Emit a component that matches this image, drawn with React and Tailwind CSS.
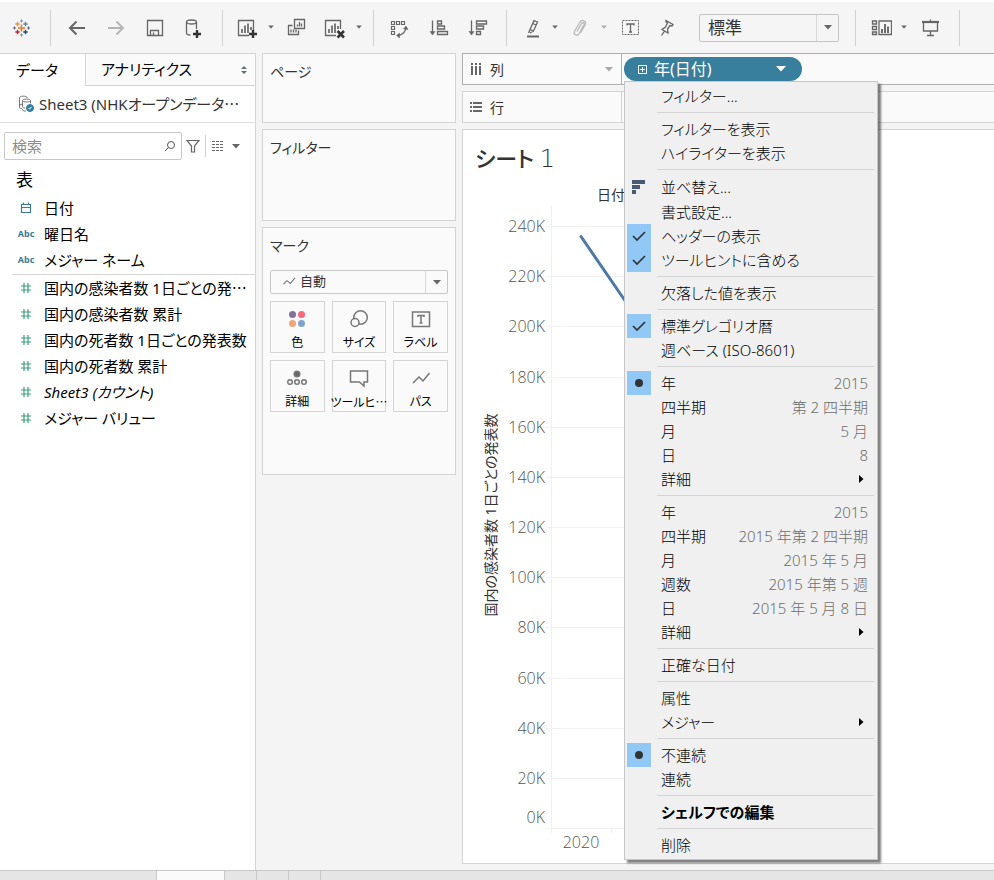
/**
 * App.jsx
 *
 * Worksheet view: toolbar, data pane, cards column, shelves and the sheet,
 * with the context menu of the 年(日付) pill open.
 */

import React, { useState } from 'react';

const CJK = "font-['Noto_Sans_CJK_JP',sans-serif]";

// ── Data ────────────────────────────────────────────────────────────────────
const DIMENSIONS = [
  { icon: 'date', label: '日付' },
  { icon: 'abc',  label: '曜日名' },
  { icon: 'abc',  label: 'メジャー ネーム' },
];

const MEASURES = [
  { label: '国内の感染者数 1日ごとの発', cut: true },
  { label: '国内の感染者数 累計' },
  { label: '国内の死者数 1日ごとの発表数' },
  { label: '国内の死者数 累計' },
  { label: 'Sheet3 (カウント)', italic: true },
  { label: 'メジャー バリュー' },
];

// One inner array per block; blocks are divided by a rule
const MENU = [
  [{ label: 'フィルター...' }],
  [{ label: 'フィルターを表示' }, { label: 'ハイライターを表示' }],
  [
    { label: '並べ替え...', mark: 'sort' },
    { label: '書式設定...' },
    { label: 'ヘッダーの表示', mark: 'check' },
    { label: 'ツールヒントに含める', mark: 'check' },
  ],
  [{ label: '欠落した値を表示' }],
  [{ label: '標準グレゴリオ暦', mark: 'check' }, { label: '週ベース (ISO-8601)' }],
  [
    { label: '年', hint: '2015', mark: 'dot' },
    { label: '四半期', hint: '第 2 四半期' },
    { label: '月', hint: '5 月' },
    { label: '日', hint: '8' },
    { label: '詳細', sub: true },
  ],
  [
    { label: '年', hint: '2015' },
    { label: '四半期', hint: '2015 年第 2 四半期' },
    { label: '月', hint: '2015 年 5 月' },
    { label: '週数', hint: '2015 年第 5 週' },
    { label: '日', hint: '2015 年 5 月 8 日' },
    { label: '詳細', sub: true },
  ],
  [{ label: '正確な日付' }],
  [{ label: '属性' }, { label: 'メジャー', sub: true }],
  [{ label: '不連続', mark: 'dot' }, { label: '連続' }],
  [{ label: 'シェルフでの編集', bold: true }],
  [{ label: '削除' }],
];

// ── Icons ───────────────────────────────────────────────────────────────────
const Icon = ({ children, color = '#666666' }) => (
  <svg width="24" height="24" viewBox="0 0 24 24" fill="none" stroke={color} strokeWidth="1.3" aria-hidden="true">
    {children}
  </svg>
);

const Caret = ({ color = '#666666', big = false }) => (
  <svg width="8" height="5" viewBox="0 0 8 5" fill={color} aria-hidden="true">
    <path d={big ? 'M0 0h8L4 4.5z' : 'M1.2 0.5h5.6L4 3.8z'} />
  </svg>
);

const cross = (x, y, r) => `M${x - r} ${y}h${r * 2}M${x} ${y - r}v${r * 2}`;

const LogoIcon = () => (
  <Icon>
    <path d={cross(11.5, 12, 3.5)} stroke="#e8762d" strokeWidth="1.6" />
    <path d={cross(7.5, 8, 2.2)} stroke="#eb912c" />
    <path d={cross(15.5, 8, 2.2)} stroke="#59879b" />
    <path d={cross(7.5, 16, 2.2)} stroke="#c72035" />
    <path d={cross(15.5, 16, 2.2)} stroke="#1f457e" />
    <path d={cross(11.5, 5, 1.6)} stroke="#7099a6" strokeWidth="1" />
    <path d={cross(11.5, 19, 1.6)} stroke="#7099a6" strokeWidth="1" />
    <path d={cross(4.5, 12, 1.6)} stroke="#5c6692" strokeWidth="1" />
    <path d={cross(18.5, 12, 1.6)} stroke="#5c6692" strokeWidth="1" />
  </Icon>
);

const BackIcon = () => (
  <Icon><path d="M19 12H4M10.5 5.5L4 12l6.5 6.5" strokeWidth="2" /></Icon>
);

const ForwardIcon = () => (
  <Icon color="#b4b4b4"><path d="M3 12h15M11.5 5.5L18 12l-6.5 6.5" strokeWidth="1.8" /></Icon>
);

const SaveIcon = () => (
  <Icon>
    <path d="M3.5 4.5h15v15h-15z" />
    <path d="M6.5 19.5v-5h8v5M9.5 19.5v-3" />
  </Icon>
);

const NewDataIcon = () => (
  <Icon>
    <ellipse cx="8.5" cy="6" rx="5" ry="2" />
    <path d="M3.5 6v11c0 1.3 2 2 4 2M13.5 6v7" />
    <path d={cross(14, 18, 4)} stroke="#333333" strokeWidth="2.4" />
  </Icon>
);

const NewSheetIcon = () => (
  <Icon>
    <path d="M14 19.5H3.5v-15h15V14" />
    <path d="M7 17v-4M10 17V9.5M13 17V7.5M16 14v-3" strokeWidth="1.7" />
    <path d={cross(18, 18, 4)} stroke="#333333" strokeWidth="2.4" />
  </Icon>
);

const DuplicateIcon = () => (
  <Icon>
    <path d="M7.5 3.5h10v9h-10z" />
    <path d="M10.5 10.5V8.5M12.5 10.5V6M14.5 10.5V7.5" />
    <path d="M5.5 9.500h-4v9h10v-4M4 16.500v-3M6.500 16.500v-3M9 16.500v-3" />
  </Icon>
);

const ClearIcon = () => (
  <Icon>
    <path d="M13 19.5H2.5v-15h15V13" />
    <path d="M6 17v-4M9 17V9.5M12 17V7.5M15 13v-3" strokeWidth="1.7" />
    <path d="M14.5 15l6.5 6.5M21 15l-6.5 6.5" stroke="#333333" strokeWidth="2.6" />
  </Icon>
);

const SwapIcon = () => (
  <Icon>
    <path d="M2.5 5.5h3v3h-3zM7.5 5.5h3v3h-3zM12.5 5.5h3v3h-3zM2.5 10.5h3v3h-3zM2.5 15.5h3v3h-3z" strokeWidth="1.2" />
    <path d="M17 11c0 4.5-3.5 8-8 8.5" />
    <path d="M14.5 13l2.5-3 2 3.5zM10.5 17l-3 2.5 3 2.5z" fill="#666666" strokeWidth="0.5" />
  </Icon>
);

const SortAscIcon = () => (
  <Icon>
    <path d="M4.5 4.5v14" />
    <path d="M2 15.5h5l-2.5 3.5z" fill="#666666" strokeWidth="0.5" />
    <path d="M9.5 5h4v3h-4zM9.5 10h7v3h-7zM9.5 15.5h10v3h-10z" />
  </Icon>
);

const SortDescIcon = () => (
  <Icon>
    <path d="M4.5 4.5v14" />
    <path d="M2 15.5h5l-2.5 3.5z" fill="#666666" strokeWidth="0.5" />
    <path d="M9.5 5h10v3h-10zM9.5 10h7v3h-7zM9.5 15.5h4v3h-4z" />
  </Icon>
);

const HighlightIcon = () => (
  <Icon>
    <path d="M8 20.5h12" strokeWidth="2" />
    <path d="M15 4.5l3.5 1.5-4 9-3.5-1.5zM11 13.5l-1.5 3.5M14.5 15l-3.5 2M13.8 7.5l3.4 1.5" />
  </Icon>
);

const ClipIcon = () => (
  <Icon color="#b9b9b9">
    <path d="M9 15.5l4.5-8c1-1.600 3.300-.4 2.500 1.300l-5 9c-1.700 2.900-6 .7-4.500-2.300l5.500-9.500c2-3 6.700-.7 5.200 2.600l-4.700 8" />
  </Icon>
);

const TextBoxIcon = () => (
  <Icon>
    <path d="M5.5 4.5h16v14h-16z" strokeWidth="1" strokeDasharray="2 1" />
    <path d="M10 9.5V8h7v1.5M13.5 8v8M12 16h3" />
  </Icon>
);

const PinIcon = () => (
  <Icon>
    <path d="M16 4.5l7 4-1 1.5-2-.5-2.5 3.5.5 4-6-3.5 3.5-2.5 2-4-1.5-1zM14.5 15.2l-3 4.3" />
  </Icon>
);

const ShowMeIcon = () => (
  <Icon>
    <path d="M4.5 5h4v3h-4zM4.5 10.5h4v3h-4zM4.5 16h4v2.5h-4zM11 5h12.500v13.500H11z" />
    <path d="M14 17v-4M17 17V8M20 17v-6.500" strokeWidth="1.9" />
  </Icon>
);

const PresentIcon = () => (
  <Icon>
    <path d="M2 6h17" strokeWidth="2.2" />
    <path d="M3.5 6v9h14V6M10.5 15v4.5M7 19.5h7M10.5 3.5V6" />
  </Icon>
);

const HashIcon = () => (
  <svg width="12" height="12" viewBox="0 0 12 12" stroke="#3fa07d" strokeWidth="1.2" aria-hidden="true">
    <path d="M4 1v10M8 1v10M1 4h10M1 8h10" />
  </svg>
);

const DateIcon = () => (
  <svg width="12" height="12" viewBox="0 0 12 12" fill="none" stroke="#3b7b97" strokeWidth="1.2" aria-hidden="true">
    <path d="M1.5 2.5h9v8h-9zM1.5 5.5h9M3.5 0.5v2M8.5 0.5v2" />
  </svg>
);

const SourceIcon = () => (
  <svg className="shrink-0" width="18" height="18" viewBox="0 0 18 18" fill="none" stroke="#777777" aria-hidden="true">
    <path d="M5 13.5H4c-1 0-1.5-.5-1.5-1.5V3c0-2.500 7-2.500 8 0" />
    <ellipse cx="9.5" cy="5.5" rx="4" ry="1.5" />
    <path d="M5.500 5.500v6c0 1 1 1.500 2.500 1.500M13.500 5.500v3M5.500 9l-3 1M9 16H6.500L5 14" />
    <circle cx="13" cy="13" r="3.5" fill="#31809f" stroke="#31809f" />
    <path d="M11.5 13l1 1.2 2-2.4" stroke="#ffffff" />
  </svg>
);

const LineMark = ({ size = 20 }) => (
  <svg width={size} height={size} viewBox="0 0 20 20" fill="none" stroke="#777777" strokeWidth="1.5" aria-hidden="true">
    <path d="M2 14.5l5-5 5 4 6.5-8" />
  </svg>
);

const MARK_BUTTONS = [
  {
    label: '色',
    icon: (
      <>
        <circle cx="5.5" cy="5.5" r="3.5" fill="#85709a" stroke="none" />
        <circle cx="14.5" cy="5.5" r="3.5" fill="#f8697b" stroke="none" />
        <circle cx="5.5" cy="14.5" r="3.5" fill="#f1a57a" stroke="none" />
        <circle cx="14.5" cy="14.5" r="3.5" fill="#7fa3cc" stroke="none" />
      </>
    ),
  },
  {
    label: 'サイズ',
    icon: (
      <>
        <circle cx="11.5" cy="8.5" r="6.8" />
        <circle cx="6" cy="13.5" r="4" fill="#fafafa" />
      </>
    ),
  },
  {
    label: 'ラベル',
    icon: <path d="M1.5 3h17v14.5h-17zM7 8V6.5h6V8M10 6.5v7.5M8.5 14h3" />,
  },
  {
    label: '詳細',
    icon: (
      <>
        <circle cx="10" cy="6" r="2.8" fill="#666666" />
        <circle cx="3" cy="14" r="2.3" />
        <circle cx="10" cy="14" r="2.3" />
        <circle cx="17" cy="14" r="2.3" />
      </>
    ),
  },
  {
    label: 'ツールヒ',
    cut: true,
    icon: <path d="M1.5 3h17v11h-3.500v4l-4.500-4h-9z" />,
  },
  { label: 'パス', icon: <path d="M2 15l6-6 4 4 6.5-8" /> },
];

// ── Toolbar ─────────────────────────────────────────────────────────────────
const ToolButton = ({ label, children }) => (
  <button type="button" aria-label={label} className="block size-6 shrink-0">{children}</button>
);

const SplitButton = ({ label, faded, children }) => (
  <div className="flex shrink-0 items-center gap-2">
    <ToolButton label={label}>{children}</ToolButton>
    <button type="button" aria-label={`${label} メニュー`}>
      <Caret color={faded ? '#aaaaaa' : '#666666'} />
    </button>
  </div>
);

const Divider = () => <span className="h-9 w-px shrink-0 bg-[#d0d0d0]" />;

const Toolbar = () => (
  <header className="flex h-[53px] shrink-0 items-center border-t-2 border-white bg-[#f5f5f5]">
    <div className="pl-[10px] pr-4">
      <ToolButton label="スタート"><LogoIcon /></ToolButton>
    </div>
    <Divider />
    <div className="flex items-center gap-[15px] px-[15px]">
      <ToolButton label="戻る"><BackIcon /></ToolButton>
      <ToolButton label="進む"><ForwardIcon /></ToolButton>
      <ToolButton label="保存"><SaveIcon /></ToolButton>
      <ToolButton label="新しいデータ ソース"><NewDataIcon /></ToolButton>
    </div>
    <Divider />
    <div className="flex items-center gap-3 pl-3 pr-[10px]">
      <SplitButton label="新しいワークシート"><NewSheetIcon /></SplitButton>
      <ToolButton label="複製"><DuplicateIcon /></ToolButton>
      <SplitButton label="クリア"><ClearIcon /></SplitButton>
    </div>
    <Divider />
    <div className="flex items-center gap-[15px] px-[15px]">
      <ToolButton label="行と列の交換"><SwapIcon /></ToolButton>
      <ToolButton label="昇順"><SortAscIcon /></ToolButton>
      <ToolButton label="降順"><SortDescIcon /></ToolButton>
    </div>
    <Divider />
    <div className="flex items-center gap-[9px] pl-3 pr-4">
      <SplitButton label="ハイライト"><HighlightIcon /></SplitButton>
      <SplitButton label="グループ" faded><ClipIcon /></SplitButton>
      <ToolButton label="マーク ラベル"><TextBoxIcon /></ToolButton>
      <ToolButton label="軸の固定"><PinIcon /></ToolButton>
      <div className="relative ml-4">
        <select
          aria-label="ビューのサイズ"
          className="h-7 w-[140px] appearance-none rounded-xs border border-[#c4c4c4] bg-transparent pl-2 text-[17px] leading-6 text-[#333333]"
        >
          <option>標準</option>
        </select>
        <span className="pointer-events-none absolute inset-y-px right-px flex w-[22px] items-center justify-center border-l border-[#d8d8d8]">
          <Caret big />
        </span>
      </div>
    </div>
    <Divider />
    <div className="flex items-center gap-3 pl-3 pr-[15px]">
      <SplitButton label="表示形式"><ShowMeIcon /></SplitButton>
      <ToolButton label="プレゼンテーション モード"><PresentIcon /></ToolButton>
    </div>
    <Divider />
  </header>
);

// ── Data pane ───────────────────────────────────────────────────────────────
const Ellipsis = () => <span className={CJK}>…</span>;

const FieldRow = ({ icon, label, cut, italic }) => (
  <li className="flex h-[26px] items-center gap-[10px] whitespace-nowrap pl-[18px] text-[15px] text-black">
    <span className="flex w-4 shrink-0 justify-center text-[9px] font-bold text-[#3b7b97]">
      {icon === 'abc' ? 'Abc' : icon === 'date' ? <DateIcon /> : <HashIcon />}
    </span>
    <span className={italic ? 'italic' : ''}>
      {label}{cut && <Ellipsis />}
    </span>
  </li>
);

const DataPane = () => (
  <aside className="w-64 shrink-0 border-r border-[#d4d4d4] bg-white">
    <div className="flex h-[33px] border-t border-[#d4d4d4] text-[15px] text-black">
      <button type="button" className="w-[85px] shrink-0 pl-4 text-left">データ</button>
      <button
        type="button"
        className="flex flex-1 items-center justify-between border-b border-l border-[#d4d4d4] bg-[#fafafa] pl-[15px] pr-2"
      >
        アナリティクス
        <svg width="6" height="8" viewBox="0 0 6 8" fill="#5f7080" aria-hidden="true">
          <path d="M3 0l3 3H0zM0 5h6L3 8z" />
        </svg>
      </button>
    </div>

    <div className="flex h-[37px] items-center gap-1 whitespace-nowrap border-b border-[#e0e0e0] pl-[17px] text-[15px] text-[#333333]">
      <SourceIcon />
      <span>Sheet3 (NHKオープンデータ<Ellipsis /></span>
    </div>

    <div className="flex items-center pl-1 pt-[9px]">
      <div className="relative">
        <input
          type="text"
          placeholder="検索"
          aria-label="検索"
          className="h-7 w-[178px] rounded-xs border border-[#c8c8c8] pl-[7px] text-[15px] placeholder:text-[#8c8c8c]"
        />
        <svg className="pointer-events-none absolute right-1.5 top-2" width="12" height="12" viewBox="0 0 12 12" fill="none" stroke="#555555" aria-hidden="true">
          <circle cx="7" cy="5" r="3.5" />
          <path d="M4.5 7.5L1 11" />
        </svg>
      </div>
      <button type="button" aria-label="フィルター" className="px-1">
        <svg width="14" height="14" viewBox="0 0 14 14" fill="none" stroke="#666666" strokeWidth="1.2" aria-hidden="true">
          <path d="M1 1.5h12L8.5 7v6h-3V7z" />
        </svg>
      </button>
      <span className="ml-px h-[22px] w-px bg-[#d0d0d0]" />
      <button type="button" aria-label="表示" className="flex items-center gap-2 pl-1.5">
        <svg width="12" height="10" viewBox="0 0 12 10" stroke="#666666" strokeWidth="1" aria-hidden="true">
          <path d="M0 .5h12M0 3.5h12M0 6.5h12M0 9.5h12" strokeDasharray="3 1" />
        </svg>
        <Caret big />
      </button>
    </div>

    <h2 className="flex h-[35px] items-center pl-4 pt-1 text-[17px] text-black">表</h2>
    <ul className="pb-px">
      {DIMENSIONS.map((field) => <FieldRow key={field.label} {...field} />)}
    </ul>
    <div className="ml-3 h-px bg-[#d8d8d8]" />
    <ul>
      {MEASURES.map((field) => <FieldRow key={field.label} {...field} />)}
    </ul>
  </aside>
);

// ── Cards column ────────────────────────────────────────────────────────────
const Card = ({ title, className, children }) => (
  <section className={`border border-[#d4d4d4] bg-[#fafafa] px-[7px] pt-2 ${className}`}>
    <h3 className="text-[14px] leading-5 text-[#333333]">{title}</h3>
    {children}
  </section>
);

const Cards = () => (
  <div className="flex w-[194px] shrink-0 flex-col gap-1.5">
    <Card title="ページ" className="h-[70px]" />
    <Card title="フィルター" className="h-[92px]" />
    <Card title="マーク" className="h-[248px]">
      <div className="relative mt-[14px]">
        <select
          aria-label="マーク タイプ"
          className="block h-6 w-full appearance-none rounded-xs border border-[#c8c8c8] bg-transparent pl-[29px] text-[13px] text-[#333333]"
        >
          <option>自動</option>
        </select>
        <span className="pointer-events-none absolute left-3 top-1"><LineMark size={14} /></span>
        <span className="pointer-events-none absolute inset-y-px right-px flex w-[22px] items-center justify-center border-l border-[#d8d8d8]">
          <Caret big />
        </span>
      </div>
      <div className="mt-[7px] grid grid-cols-3 gap-[7px]">
        {MARK_BUTTONS.map(({ label, cut, icon }) => (
          <button
            key={label}
            type="button"
            className="flex h-[52px] flex-col items-center gap-1.5 whitespace-nowrap border border-[#d4d4d4] pt-[7px] text-[12px] leading-4 text-black"
          >
            <svg className="shrink-0" width="20" height="20" viewBox="0 0 20 20" fill="none" stroke="#777777" strokeWidth="1.5" aria-hidden="true">
              {icon}
            </svg>
            <span>{label}{cut && <Ellipsis />}</span>
          </button>
        ))}
      </div>
    </Card>
  </div>
);

// ── Context menu ────────────────────────────────────────────────────────────
const MenuMark = ({ mark }) => {
  if (mark === 'sort') {
    return (
      <svg className="size-6" viewBox="0 0 24 24" fill="#4b5a73" aria-hidden="true">
        <path d="M5 5h13v4H5zM5 10h8v4H5zM5 15h4v4H5z" />
      </svg>
    );
  }
  return (
    <svg className="size-6 bg-[#91c8f6]" viewBox="0 0 24 24" aria-hidden="true">
      {mark === 'check'
        ? <path d="M6 12l4 4 8-8" fill="none" stroke="#333333" strokeWidth="1.7" />
        : <circle cx="12" cy="12" r="4" fill="#333333" />}
    </svg>
  );
};

const MenuItem = ({ label, hint, mark, sub, bold }) => (
  <button
    type="button"
    role="menuitem"
    className={`flex w-full items-center whitespace-nowrap pl-0.5 pr-[9px] text-left text-[15px] leading-6 text-black ${mark === 'sort' ? 'h-[26px]' : 'h-6'} ${bold ? 'font-bold' : 'font-light'}`}
  >
    <span className="mr-[10px] size-6 shrink-0">{mark && <MenuMark mark={mark} />}</span>
    <span className="flex-1">{label}</span>
    {hint && <span className="text-[#6e6e6e]">{hint}</span>}
    {sub && (
      <svg className="mr-1" width="6" height="8" viewBox="0 0 6 8" aria-hidden="true">
        <path d="M1 0l4.5 4L1 8z" />
      </svg>
    )}
  </button>
);

const PillMenu = () => (
  <div
    role="menu"
    className="absolute left-0 top-full z-10 w-[254px] border border-[#c6c6c6] bg-[#f0f0f0] py-0.5 shadow-[3px_3px_2px_rgba(0,0,0,0.5)]"
  >
    {MENU.map((block, i) => (
      <div key={i}>
        {i > 0 && <div role="separator" className="my-1 ml-8 mr-[3px] h-px bg-[#d4d4d4]" />}
        {block.map((item) => <MenuItem key={item.label} {...item} />)}
      </div>
    ))}
  </div>
);

// ── Shelves ─────────────────────────────────────────────────────────────────
const ColumnsIcon = () => (
  <svg width="12" height="12" viewBox="0 0 12 12" fill="#666666" aria-hidden="true">
    <path d="M1 0h2v2H1zM5 0h2v2H5zM9 0h2v2H9zM1 3h2v9H1zM5 3h2v9H5zM9 3h2v9H9z" />
  </svg>
);

const RowsIcon = () => (
  <svg width="12" height="12" viewBox="0 0 12 12" fill="#666666" aria-hidden="true">
    <path d="M0 1h2v2H0zM0 5h2v2H0zM0 9h2v2H0zM3 1h9v2H3zM3 5h9v2H3zM3 9h9v2H3z" />
  </svg>
);

const Shelf = ({ icon, label, active, children }) => (
  <div className={`flex h-8 shrink-0 border-y border-l bg-[#fafafa] ${active ? 'border-[#b0b0b0]' : 'border-[#d4d4d4]'}`}>
    <div className={`flex w-[159px] shrink-0 items-center gap-2 border-r pl-[7px] pr-2 text-[14px] text-[#333333] ${active ? 'border-[#b0b0b0]' : 'border-[#d4d4d4]'}`}>
      {icon}
      <span className="flex-1">{label}</span>
      {active && <Caret big color="#aaaaaa" />}
    </div>
    <div className="flex flex-1 items-center pl-0.5">{children}</div>
  </div>
);

const DatePill = () => {
  const [open, setOpen] = useState(true);

  return (
    <div className="relative">
      <button
        type="button"
        aria-haspopup="menu"
        aria-expanded={open}
        onClick={() => setOpen(!open)}
        className="flex h-6 w-[178px] items-center rounded-full bg-[#387e9d] pl-[14px] pr-4 text-base text-white"
      >
        <svg className="mr-[7px]" width="9" height="9" viewBox="0 0 9 9" fill="none" stroke="#ffffff" aria-hidden="true">
          <path d="M.5 .5h8v8h-8zM2 4.5h5M4.5 2v5" />
        </svg>
        <span className="flex-1 text-left">年(日付)</span>
        <svg width="10" height="6" viewBox="0 0 10 6" fill="#ffffff" aria-hidden="true">
          <path d="M0 0h10L5 5.5z" />
        </svg>
      </button>
      {open && <PillMenu />}
    </div>
  );
};

// ── Sheet ───────────────────────────────────────────────────────────────────
const TICKS = [240, 220, 200, 180, 160, 140, 120, 100, 80, 60, 40, 20, 0];
const BASE  = 642;                          // y of the 0K line
const yOf   = (k) => Math.round(BASE - k * 2.508) + 0.5;

const Chart = () => (
  <svg className="block h-full w-full" aria-label="国内の感染者数 1日ごとの発表数">
    <text x="134" y="14" fontSize="14" fill="#333333">日付</text>
    <text transform="translate(33 329) rotate(-90)" textAnchor="middle" fontSize="14" fill="#333333">
      国内の感染者数 1日ごとの発表数
    </text>
    {TICKS.map((k) => (
      <g key={k}>
        <path d={`M83 ${yOf(k)}H400`} stroke="#f0f0f0" />
        <text
          x="82"
          y={k === 0 ? 637 : yOf(k) + 5}
          textAnchor="end"
          className="font-['Open_Sans',sans-serif] font-light"
          fontSize="16"
          fill="#555555"
        >
          {k}K
        </text>
      </g>
    ))}
    <path d="M88.5 19v628M148.5 642v5" stroke="#f0f0f0" />
    <text x="118" y="662" textAnchor="middle" className="font-['Open_Sans',sans-serif] font-light" fontSize="16" fill="#555555">
      2020
    </text>
    <path d="M118 50.5L178 138" stroke="#4e79a7" strokeWidth="3" strokeLinecap="round" />
  </svg>
);

const Sheet = () => (
  <main className="flex min-h-0 flex-1 flex-col border-y border-l border-[#d4d4d4] bg-white">
    <h1 className="flex h-14 shrink-0 items-center pl-3 text-[22px] font-medium text-[#333333]">
      <span>シート <span className="font-['DejaVu_Sans',sans-serif] text-2xl font-extralight">1</span></span>
    </h1>
    <div className="min-h-0 flex-1"><Chart /></div>
  </main>
);

// ── Bottom sheet tabs ───────────────────────────────────────────────────────
const TabStrip = () => (
  <footer className="flex h-[10px] shrink-0 border-t border-[#c8c8c8] bg-[#e5e5e5] pl-[156px]">
    <div className="w-[69px] border-x border-[#c8c8c8] bg-[#fafafa]" />
    <div className="w-8 border-r border-[#c8c8c8]" />
    <div className="w-8 border-r border-[#c8c8c8]" />
    <div className="w-8 border-r border-[#c8c8c8]" />
  </footer>
);

const App = () => (
  <div
    lang="ja"
    className="flex h-screen flex-col overflow-hidden bg-[#f4f4f4] font-['Noto_Sans','Noto_Sans_CJK_JP',sans-serif] [font-feature-settings:'palt']"
  >
    <Toolbar />
    <div className="flex min-h-0 flex-1">
      <DataPane />
      <div className="flex min-w-0 flex-1 gap-1.5 pb-1.5 pl-1.5">
        <Cards />
        <div className="flex min-w-0 flex-1 flex-col gap-1.5">
          <Shelf icon={<ColumnsIcon />} label="列" active><DatePill /></Shelf>
          <Shelf icon={<RowsIcon />} label="行" />
          <Sheet />
        </div>
      </div>
    </div>
    <TabStrip />
  </div>
);

export default App;
